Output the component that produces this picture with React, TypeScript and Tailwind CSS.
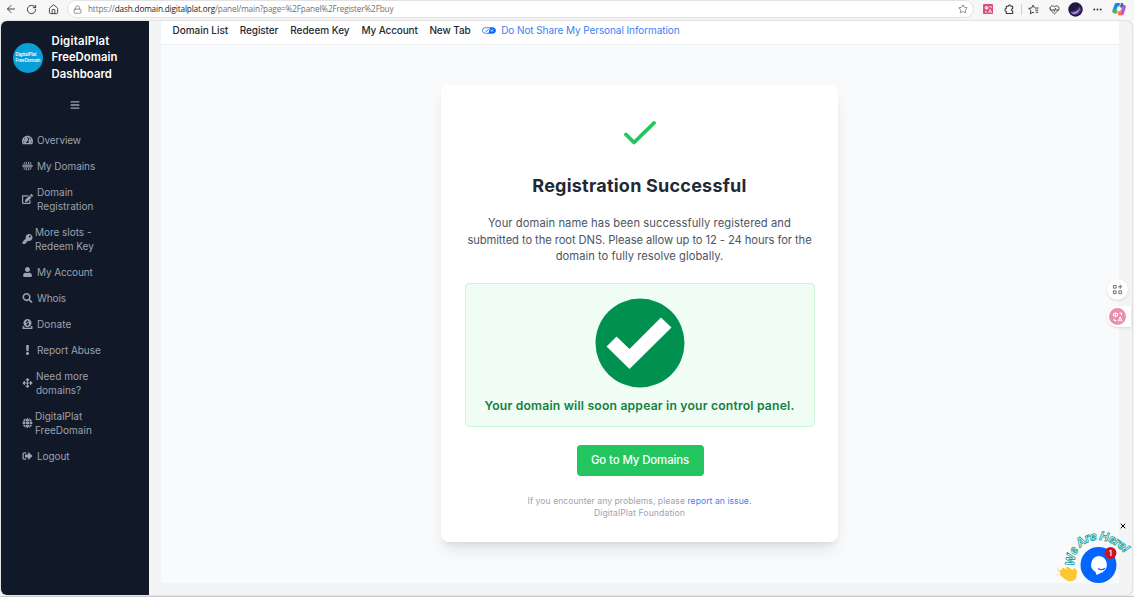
import type { ComponentType, ReactNode } from "react";
import {
  FaArrowsAlt,
  FaBars,
  FaDonate,
  FaEdit,
  FaExclamation,
  FaGlobe,
  FaKey,
  FaSearch,
  FaSignOutAlt,
  FaTachometerAlt,
  FaUser,
} from "react-icons/fa";
import { ArrowLeft, Ellipsis, HeartPulse, House, Lock, RotateCw, Star, X } from "lucide-react";

interface MenuItem {
  label: string[];
  icon: ComponentType<{ className?: string }>;
  gap: string;
  tracking: string;
}

// Globe split into three bands, with the equator running past the edges
const BandedGlobe = ({ className }: { className?: string }) => (
  <svg viewBox="0 0 20 18" className={className} fill="currentColor">
    <path d="M7 1Q5 3 5 5H2.500Q4 2 7 1ZM9.200.7v4.300H6.500Q7 2 9.200.7ZM10.800.7Q13 2 13.500 5h-2.700ZM13 1q3 1 4.500 4H15q0-2-2-4Z" />
    <path d="M2 6.300h16v1.200H2ZM0 8.200h20v1.600H0ZM2 10.500h16v1.200H2Z" />
    <path d="M7 17q-2-2-2-4H2.500Q4 16 7 17ZM9.200 17.300V13H6.500Q7 16 9.200 17.300ZM10.800 17.300Q13 16 13.500 13h-2.700ZM13 17q3-1 4.500-4H15q0 2-2 4Z" />
  </svg>
);

const MENU: MenuItem[] = [
  { label: ["Overview"], icon: FaTachometerAlt, gap: "gap-1", tracking: "tracking-[-0.1px]" },
  { label: ["My Domains"], icon: BandedGlobe, gap: "gap-1", tracking: "tracking-[-0.05px]" },
  { label: ["Domain", "Registration"], icon: FaEdit, gap: "gap-1", tracking: "tracking-[0.02px]" },
  { label: ["More slots -", "Redeem Key"], icon: FaKey, gap: "gap-[2px]", tracking: "tracking-[-0.03px]" },
  { label: ["My Account"], icon: FaUser, gap: "gap-1", tracking: "tracking-[-0.12px]" },
  { label: ["Whois"], icon: FaSearch, gap: "gap-1", tracking: "tracking-[-0.1px]" },
  { label: ["Donate"], icon: FaDonate, gap: "gap-1", tracking: "tracking-[0.1px]" },
  { label: ["Report Abuse"], icon: FaExclamation, gap: "gap-1", tracking: "tracking-[-0.05px]" },
  { label: ["Need more", "domains?"], icon: FaArrowsAlt, gap: "gap-[3px]", tracking: "tracking-[0px]" },
  { label: ["DigitalPlat", "FreeDomain"], icon: FaGlobe, gap: "gap-[2px]", tracking: "tracking-[0px]" },
  { label: ["Logout"], icon: FaSignOutAlt, gap: "gap-1", tracking: "tracking-[-0.1px]" },
];

const NAV = [
  { label: "Domain List", width: "w-[55.5px]", tracking: "tracking-[-0.03px]" },
  { label: "Register", width: "w-[38.7px]", tracking: "tracking-[-0.1px]" },
  { label: "Redeem Key", width: "w-[59.5px]", tracking: "tracking-[-0.04px]" },
  { label: "My Account", width: "w-[56px]", tracking: "tracking-[-0.15px]" },
  { label: "New Tab", width: "w-[41px]", tracking: "tracking-[-0.1px]" },
];

const TranslateGlyph = ({ className }: { className?: string }) => (
  <svg viewBox="0 0 12 12" className={className} fill="none" stroke="white" strokeWidth="1">
    <path d="M1.5 2.5h4v2.4h-4zM3.5 1.2v5M7.3 2h2.2v2.2M2.2 7.8v1.8h2.3M6.3 10.5l1.9-4.7 1.9 4.7M7 9.2h2.5" />
  </svg>
);

function BrowserBar() {
  return (
    <header className="flex h-[18px] items-center bg-[#f7f7f7] text-[#333]">
      <ArrowLeft size={12} strokeWidth={1.8} className="ml-[5px]" />
      <RotateCw size={11} strokeWidth={2} className="ml-[9px]" />
      <House size={11} strokeWidth={1.9} className="ml-[11px]" />
      <div className="ml-[8px] flex h-[18px] w-[907px] items-center rounded-full border border-[#e2e2e2] bg-white pr-[5px] pl-[5px]">
        <Lock size={9} strokeWidth={1.8} className="text-[#666]" />
        <span className="ml-[6px] grow font-['Open_Sans',sans-serif] text-[8.2px] tracking-[-0.155px] whitespace-nowrap text-[#707070]">
          https://<span className="text-[#202020]">dash.domain.digitalplat.org</span>
          /panel/main?page=%2Fpanel%2Fregister%2Fbuy
        </span>
        <Star size={10} strokeWidth={1.7} className="text-[#666]" />
      </div>
      <div className="ml-[9px] flex h-[10px] w-[10px] items-center justify-center rounded-[1px] bg-[#dd4b7d]">
        <TranslateGlyph className="h-[9px] w-[9px]" />
      </div>
      <svg
        viewBox="0 0 12 12"
        className="ml-[11px] h-[11px] w-[11px]"
        fill="none"
        stroke="currentColor"
        strokeWidth="1.1"
        strokeLinejoin="round"
      >
        <path d="M2.5 2.4h2.2a1.4 1.4 0 0 1 2.8 0h2v2.5a1.3 1.3 0 0 0 0 2.6v2.8h-7V8a1.5 1.5 0 1 1 0-3Z" />
      </svg>
      <div className="ml-[6px] h-[11px] w-px bg-[#d0d0d0]" />
      <svg viewBox="0 0 12 12" className="ml-[6px] h-[11px] w-[11px]" fill="none" stroke="currentColor" strokeWidth="1">
        <path d="M7.5 4.4h4M7.8 6.7h3.4M8.5 9h2.7M7 4.3 5.5 1.2 4 4.3.7 4.8l2.5 2.4-.7 3.5 3-1.7 1.2.7" />
      </svg>
      <HeartPulse size={11} strokeWidth={1.8} className="ml-[10px]" />
      <svg viewBox="0 0 16 16" className="ml-[8px] h-[15px] w-[15px]">
        <circle cx="8" cy="8" r="7.7" fill="#20183f" />
        <path d="M2 10Q10 10 12 4q5 5-1 9Q6 16 2 11Z" fill="#4a347f" />
        <path d="M3 11q6 1 10-5-1 6-7 7Z" fill="#b49be5" />
      </svg>
      <Ellipsis size={11} strokeWidth={2.2} className="ml-[9px]" />
      <svg viewBox="0 0 16 16" className="ml-[9px] h-[14px] w-[14px]" fill="none" strokeWidth="4" strokeLinejoin="round">
        <path d="M9 3H5L2.5 10H5" stroke="#1688df" />
        <path d="M3 8.5 2.5 11H6" stroke="#44b952" />
        <path d="m7 13 3-9" stroke="#f7c63b" />
        <path d="M10 3h1l1 3" stroke="#245fd4" />
        <path d="M12 5.5h2L11.5 13H8" stroke="#b559dc" />
        <path d="M11 13H7" stroke="#f76b69" />
        <path d="m6.7 9.8 2.6-3.6" stroke="white" strokeWidth="3" />
      </svg>
    </header>
  );
}

function Sidebar() {
  return (
    <aside className="flex w-[148px] shrink-0 flex-col bg-[#111827]">
      <div className="mt-[12px] flex items-center pl-[12px]">
        <div className="flex h-[30px] w-[30px] items-center justify-center rounded-full bg-[#079fd8]">
          <p className="text-[4.3px] leading-[5.2px] font-semibold whitespace-nowrap text-white">
            DigitalPlat
            <br />
            FreeDomain
          </p>
        </div>
        <h1 className="ml-[8.5px] text-[11.3px] leading-[16.4px] font-semibold text-white">
          <span className="tracking-[0.25px]">DigitalPlat</span>
          <br />
          <span className="tracking-[0.03px]">FreeDomain</span>
          <br />
          <span className="tracking-[0.1px]">Dashboard</span>
        </h1>
      </div>
      <FaBars className="mt-[17.5px] h-[10px] w-[10px] self-center text-[#9ca3af]" />
      <nav className="mt-[17px] pl-[21px] text-[#9ca3af]">
        {MENU.map(({ label, icon: Icon, gap, tracking }) => (
          <div key={label[0]} className={`flex items-center py-[6px] ${gap}`}>
            <Icon className="h-[10px] w-[11px] shrink-0" />
            <span className={`text-[10px] leading-[14px] whitespace-nowrap ${tracking}`}>
              {label.map((line) => (
                <span key={line} className="block">
                  {line}
                </span>
              ))}
            </span>
          </div>
        ))}
      </nav>
    </aside>
  );
}

function TopNav() {
  return (
    <nav className="flex h-[24px] shrink-0 items-center gap-[11.8px] border-b border-[#eceef1] bg-white pb-[4px] pl-[11.5px] text-[10px] font-medium whitespace-nowrap text-[#1f2937]">
      {NAV.map((item) => (
        <a key={item.label} className={`${item.width} ${item.tracking}`}>
          {item.label}
        </a>
      ))}
      <a className="flex items-center font-normal tracking-[-0.08px] text-[#3b82f6]">
        <svg viewBox="0 0 30 14" className="mr-[5px] h-[7px] w-[14px]">
          <rect x="1" y="1" width="28" height="12" rx="6" fill="white" stroke="#0066ff" strokeWidth="1.6" />
          <path d="M17 1h6a6 6 0 0 1 0 12h-9Z" fill="#0066ff" />
          <path d="m7 7 2.5 2.5L14 4" fill="none" stroke="#0066ff" strokeWidth="1.7" />
          <path d="m19 4.5 5 5m0-5-5 5" stroke="white" strokeWidth="1.7" />
        </svg>
        Do Not Share My Personal Information
      </a>
    </nav>
  );
}

const Line = ({ className = "", children }: { className?: string; children: ReactNode }) => (
  <span className={`block whitespace-nowrap ${className}`}>{children}</span>
);

function SuccessCard() {
  return (
    <section className="mt-[40px] flex h-[457px] w-[397px] flex-col items-center rounded-lg bg-white shadow-lg">
      <svg viewBox="0 0 32 24" className="mt-[35.5px] h-[24px] w-[32px]" fill="none">
        <path
          d="m2 13.5 8 8L30 2"
          stroke="#22c55e"
          strokeWidth="3.8"
          strokeLinecap="round"
          strokeLinejoin="round"
        />
      </svg>
      <h2 className="mt-[27px] text-[18px] leading-[28px] font-bold tracking-[0.23px] whitespace-nowrap text-[#1f2937]">
        Registration Successful
      </h2>
      <p className="mt-[15.5px] text-center text-[11.2px] leading-[16.6px] text-[#4b5563]">
        <Line className="tracking-[0.07px]">Your domain name has been successfully registered and</Line>
        <Line className="tracking-[-0.08px]">submitted to the root DNS. Please allow up to 12 - 24 hours for the</Line>
        <Line className="tracking-[0.02px]">domain to fully resolve globally.</Line>
      </p>
      <div className="mt-[18px] flex h-[144px] w-[350px] flex-col items-center rounded border border-[#ccf5da] bg-[#f0fdf4] pt-[14px]">
        <svg viewBox="0 0 90 90" className="h-[90px] w-[90px] shrink-0">
          <circle cx="45" cy="45" r="44.5" fill="#009150" />
          <path d="M11.5 48.5 21.5 38.5 34.5 51 66 19.5 76.5 29.5 34.5 71Z" fill="white" />
        </svg>
        <p className="mt-[9px] text-[12.2px] leading-[18px] font-semibold tracking-[0.18px] whitespace-nowrap text-[#15803d]">
          Your domain will soon appear in your control panel.
        </p>
      </div>
      <button className="mt-[18px] ml-px h-[31px] w-[127px] rounded bg-[#22c55e] pt-px text-[11.4px] font-medium tracking-[-0.1px] whitespace-nowrap text-white">
        Go to My Domains
      </button>
      <p className="mt-[19px] text-center text-[8.6px] leading-[12px] text-[#9ca3af]">
        <Line className="tracking-[0.05px]">
          If you encounter any problems, please <a className="text-[#3b82f6]">report an issue.</a>
        </Line>
        <Line className="tracking-[0.13px]">DigitalPlat Foundation</Line>
      </p>
    </section>
  );
}

function ChatWidget() {
  return (
    <div className="absolute right-0 bottom-[10px] h-[68px] w-[78px]">
      <X size={8} strokeWidth={3} className="absolute top-[3px] right-[7px] text-black" />
      <svg viewBox="0 0 78 68" className="h-full w-full overflow-visible">
        <path id="greeting-arc" d="M18 48C18 18 50 12 70 36" fill="none" />
        <text fontSize="12" fontWeight="700" fill="white" stroke="#14a0a0" strokeWidth="0.8" fontStyle="italic">
          <textPath href="#greeting-arc" textLength="71">
            We Are Here!
          </textPath>
        </text>
        <path
          d="M6 50q0-2 2-1l3 2-1-2q0-2 2-1l5 3 1-2q3 1 3 5l-1 6q-5 4-10 1l-6-5q-1-2 1-2l-2-2q0-2 3-1Z"
          fill="#fdc82f"
        />
        <path d="M2 49v3M4 47l-1 1M1 55l1 2" stroke="#f6d77b" strokeWidth="0.8" />
        <circle cx="42.5" cy="46" r="18" fill="#0566ff" />
        <path d="M42.5 37a8.7 8.7 0 0 1 4 16.2L40.5 56l-1-3A8.6 8.6 0 0 1 42.5 37Z" fill="white" />
        <path d="M42 49.5q3.5 2.5 7-.3" fill="none" stroke="#0566ff" strokeWidth="1.2" />
        <circle cx="54.5" cy="34" r="6" fill="#c9161d" />
        <text x="54.5" y="36.6" fontSize="7" fontWeight="600" fill="white" textAnchor="middle">
          1
        </text>
      </svg>
    </div>
  );
}

export default function App() {
  return (
    <div className="relative flex h-[597px] w-[1134px] flex-col overflow-hidden bg-[#f7f7f7] font-['Inter',sans-serif]">
      <BrowserBar />
      <div className="mt-[3px] mr-[2px] ml-px flex h-[574px] overflow-hidden rounded-md bg-gray-100 shadow-[0_0_2px_#aaa]">
        <Sidebar />
        <main className="ml-[12px] flex h-[562px] w-[958px] flex-col bg-[#f9fafb]">
          <TopNav />
          <div className="flex justify-center pr-px">
            <SuccessCard />
          </div>
        </main>
      </div>
      <div className="absolute top-[279px] right-[6px] flex h-[21px] w-[21px] items-center justify-center rounded-full bg-white shadow">
        <svg viewBox="0 0 12 12" className="h-[11px] w-[11px]" fill="none" stroke="#666" strokeWidth="1">
          <path d="M1.5 1.5h3v3h-3zM1.5 7.5h3v3h-3zM7.5 7.5h3v3h-3zM9 .8v4.4M6.8 3h4.4" />
        </svg>
      </div>
      <div className="absolute top-[306px] right-[3px] flex h-[21px] w-[24px] items-center rounded-l-full bg-white pl-[2px] shadow">
        <div className="flex h-[17px] w-[17px] items-center justify-center rounded-full bg-[#e891af]">
          <TranslateGlyph className="h-[12px] w-[12px]" />
        </div>
      </div>
      <ChatWidget />
      <div className="absolute bottom-0 left-0 h-px w-full bg-[#c9c9cc]" />
    </div>
  );
}
